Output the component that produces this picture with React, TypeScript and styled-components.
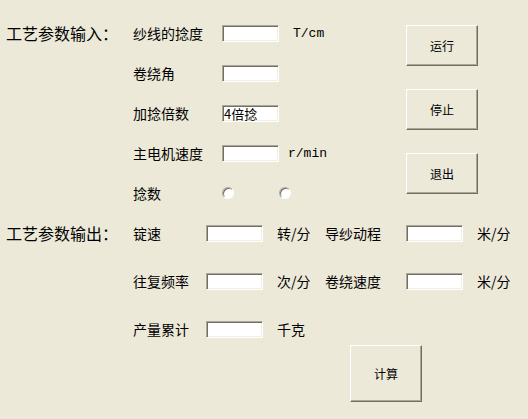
import styled, { createGlobalStyle } from "styled-components";

// ─── Global ────────────────────────────
const GlobalStyle = createGlobalStyle`
  html, body { margin: 0; padding: 0; background: #ece9d8; }
  * { box-sizing: border-box; }
`;

// ─── Styled Components ────────────────────────────
const Window = styled.div`
  width: 528px;
  height: 419px;
  background: #ece9d8;
  font-family: "Noto Sans CJK SC", "DejaVu Sans", sans-serif;
  color: #000000;
  overflow: hidden;
  padding: 25px 0 0 6px;
`;

const Section = styled.div`
  display: flex;
  align-items: flex-start;
`;

const SectionTitle = styled.div`
  width: 127px;
  height: 17px;
  line-height: 17px;
  font-size: 16px;
  white-space: nowrap;
  flex-shrink: 0;
`;

const InputGrid = styled.div`
  display: grid;
  grid-template-columns: 89px 57px 1fr;
  grid-auto-rows: 17px;
  row-gap: 23px;
  width: 273px;
  flex-shrink: 0;
`;

const FieldLabel = styled.span`
  font-size: 14px;
  line-height: 17px;
  white-space: nowrap;
`;

const TextBox = styled.div`
  width: 57px;
  height: 17px;
  background: #ffffff;
  border: 1px solid;
  border-color: #aca899 #ffffff #ffffff #aca899;
  box-shadow: inset 1px 1px #716f64, inset -1px -1px #f1efe2;
  font-size: 13px;
  line-height: 15px;
  padding-left: 1px;
  white-space: nowrap;
`;

const Unit = styled.span<{ $indent: number }>`
  font-family: "Liberation Mono", "DejaVu Sans Mono", monospace;
  font-size: 13px;
  line-height: 17px;
  padding-left: ${(p) => p.$indent}px;
  white-space: nowrap;
`;

const CnUnit = styled.span`
  font-size: 14px;
  line-height: 17px;
  padding-left: 14px;
  white-space: nowrap;
`;

const RadioGroup = styled.div`
  grid-column: 2 / span 2;
  display: flex;
  gap: 45px;
  padding-top: 2px;
`;

const Radio = styled.span`
  width: 12px;
  height: 12px;
  border-radius: 50%;
  background: #ffffff;
  border: 1px solid;
  border-color: #aca899 #ffffff #ffffff #aca899;
  box-shadow: inset 1px 1px #716f64;
`;

const ButtonColumn = styled.div`
  display: flex;
  flex-direction: column;
  gap: 23px;
`;

const CmdButton = styled.button`
  width: 72px;
  height: 41px;
  padding: 0;
  background: #ece9d8;
  border: 1px solid;
  border-color: #ffffff #716f64 #716f64 #ffffff;
  box-shadow: inset -1px -1px #aca899;
  font-family: inherit;
  font-size: 12px;
  color: #000000;
  cursor: pointer;
`;

const OutputSection = styled(Section)`
  margin-top: 23px;
`;

const OutputBody = styled.div`
  display: flex;
  flex-direction: column;
`;

const OutputGrid = styled.div`
  display: grid;
  grid-template-columns: 73px 57px 62px 81px 57px auto;
  grid-auto-rows: 17px;
  row-gap: 31px;
`;

const CalcRow = styled.div`
  display: flex;
  padding-left: 217px;
  margin-top: 7px;
`;

const CalcButton = styled(CmdButton)`
  width: 72px;
  height: 57px;
`;

// ─── Component ────────────────────────────────────
const inputs = [
  { label: "纱线的捻度", value: "", unit: "T/cm", indent: 14 },
  { label: "卷绕角", value: "" },
  { label: "加捻倍数", value: "4倍捻" },
  { label: "主电机速度", value: "", unit: "r/min", indent: 9 },
];

export default function App() {
  return (
    <>
      <GlobalStyle />
      <Window>
        {/* ── 输入 ── */}
        <Section>
          <SectionTitle>工艺参数输入：</SectionTitle>
          <InputGrid>
            {inputs.map((f) => [
              <FieldLabel key={f.label + "-l"}>{f.label}</FieldLabel>,
              <TextBox key={f.label + "-v"}>{f.value}</TextBox>,
              f.unit ? (
                <Unit key={f.label + "-u"} $indent={f.indent ?? 0}>{f.unit}</Unit>
              ) : (
                <span key={f.label + "-u"} />
              ),
            ])}
            <FieldLabel>捻数</FieldLabel>
            <RadioGroup>
              <Radio />
              <Radio />
            </RadioGroup>
          </InputGrid>
          <ButtonColumn>
            <CmdButton>运行</CmdButton>
            <CmdButton>停止</CmdButton>
            <CmdButton>退出</CmdButton>
          </ButtonColumn>
        </Section>

        {/* ── 输出 ── */}
        <OutputSection>
          <SectionTitle>工艺参数输出：</SectionTitle>
          <OutputBody>
            <OutputGrid>
              <FieldLabel>锭速</FieldLabel>
              <TextBox />
              <CnUnit>转/分</CnUnit>
              <FieldLabel>导纱动程</FieldLabel>
              <TextBox />
              <CnUnit>米/分</CnUnit>

              <FieldLabel>往复频率</FieldLabel>
              <TextBox />
              <CnUnit>次/分</CnUnit>
              <FieldLabel>卷绕速度</FieldLabel>
              <TextBox />
              <CnUnit>米/分</CnUnit>

              <FieldLabel>产量累计</FieldLabel>
              <TextBox />
              <CnUnit>千克</CnUnit>
            </OutputGrid>
            <CalcRow>
              <CalcButton>计算</CalcButton>
            </CalcRow>
          </OutputBody>
        </OutputSection>
      </Window>
    </>
  );
}
